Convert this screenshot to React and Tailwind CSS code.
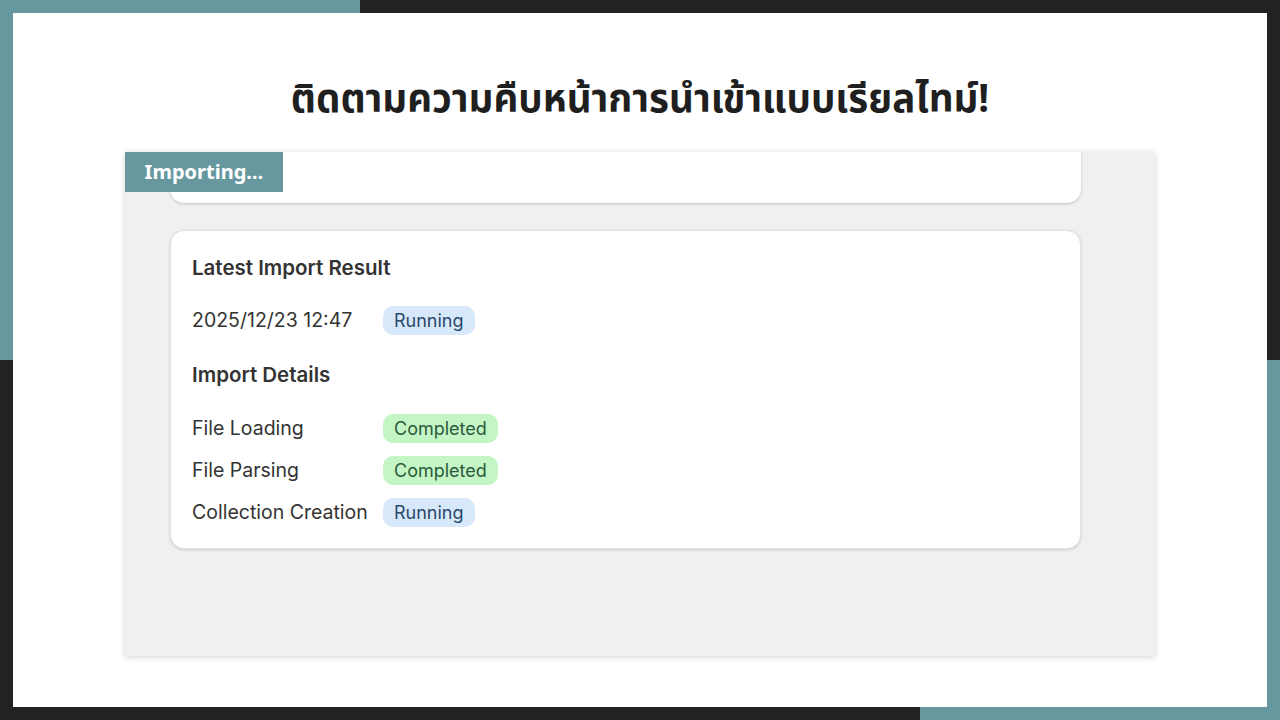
import React from 'react';

const steps = [
  { name: 'File Loading', status: 'completed' },
  { name: 'File Parsing', status: 'completed' },
  { name: 'Collection Creation', status: 'running' },
];

function Badge({ status }) {
  if (status === 'completed') {
    return (
      <span className="inline-flex h-[29px] items-center rounded-[10px] bg-[#c4f5c4] px-[11px] text-[18px] text-[#2c5a3c]">
        Completed
      </span>
    );
  }
  return (
    <span className="inline-flex h-[29px] items-center rounded-[10px] bg-[#d8e8fb] px-[11px] text-[18px] text-[#2a4869]">
      Running
    </span>
  );
}

export default function App() {
  return (
    <div className="relative h-[720px] w-[1280px] overflow-hidden bg-[#222222]">
      {/* corner accents behind the white sheet */}
      <div className="absolute left-0 top-0 h-[360px] w-[360px] bg-[#67989f]" />
      <div className="absolute bottom-0 right-0 h-[360px] w-[360px] bg-[#67989f]" />

      <div className="relative m-[13px] flex h-[694px] flex-col items-center bg-white">
        <h1 className="mt-[61px] text-[38.5px] font-bold leading-[46px] text-[#1f1f1f] [font-family:'Noto_Sans','Noto_Sans_Thai',sans-serif]">
          ติดตามความคืบหน้าการนำเข้าแบบเรียลไทม์!
        </h1>

        <div className="relative mt-[32px] h-[504px] w-[1030px] overflow-hidden bg-[#f0f0f0] shadow-[0_1px_6px_rgba(0,0,0,0.18)] [font-family:Inter,'Noto_Sans',sans-serif]">
          <div className="flex flex-col pl-[45px] pr-[74px]">
            <div className="h-[51px] rounded-b-[14px] bg-white shadow-[0_1px_3px_rgba(0,0,0,0.2)]" />

            <div className="mt-[27px] h-[319px] rounded-[14px] border border-[#e2e2e2] bg-white px-[21px] pt-[23px] shadow-[0_1px_3px_rgba(0,0,0,0.15)]">
              <p className="text-[20.5px] font-semibold leading-[28px] text-[#333333]">Latest Import Result</p>

              <div className="mt-[24px] flex items-center">
                <span className="w-[191px] text-[19.5px] text-[#333333]">2025/12/23 12:47</span>
                <Badge status="running" />
              </div>

              <p className="mt-[26px] text-[20.5px] font-semibold leading-[28px] text-[#333333]">Import Details</p>

              <div className="mt-[25px] flex flex-col gap-[12.5px]">
                {steps.map((s) => (
                  <div key={s.name} className="flex items-center">
                    <span className="w-[191px] text-[19.5px] text-[#333333]">{s.name}</span>
                    <Badge status={s.status} />
                  </div>
                ))}
              </div>
            </div>
          </div>

          <div className="absolute left-0 top-0 flex h-[40px] w-[158px] items-center justify-center bg-[#67989f] text-[20px] font-bold text-white [font-family:'Noto_Sans',sans-serif]">
            Importing…
          </div>
        </div>
      </div>
    </div>
  );
}
